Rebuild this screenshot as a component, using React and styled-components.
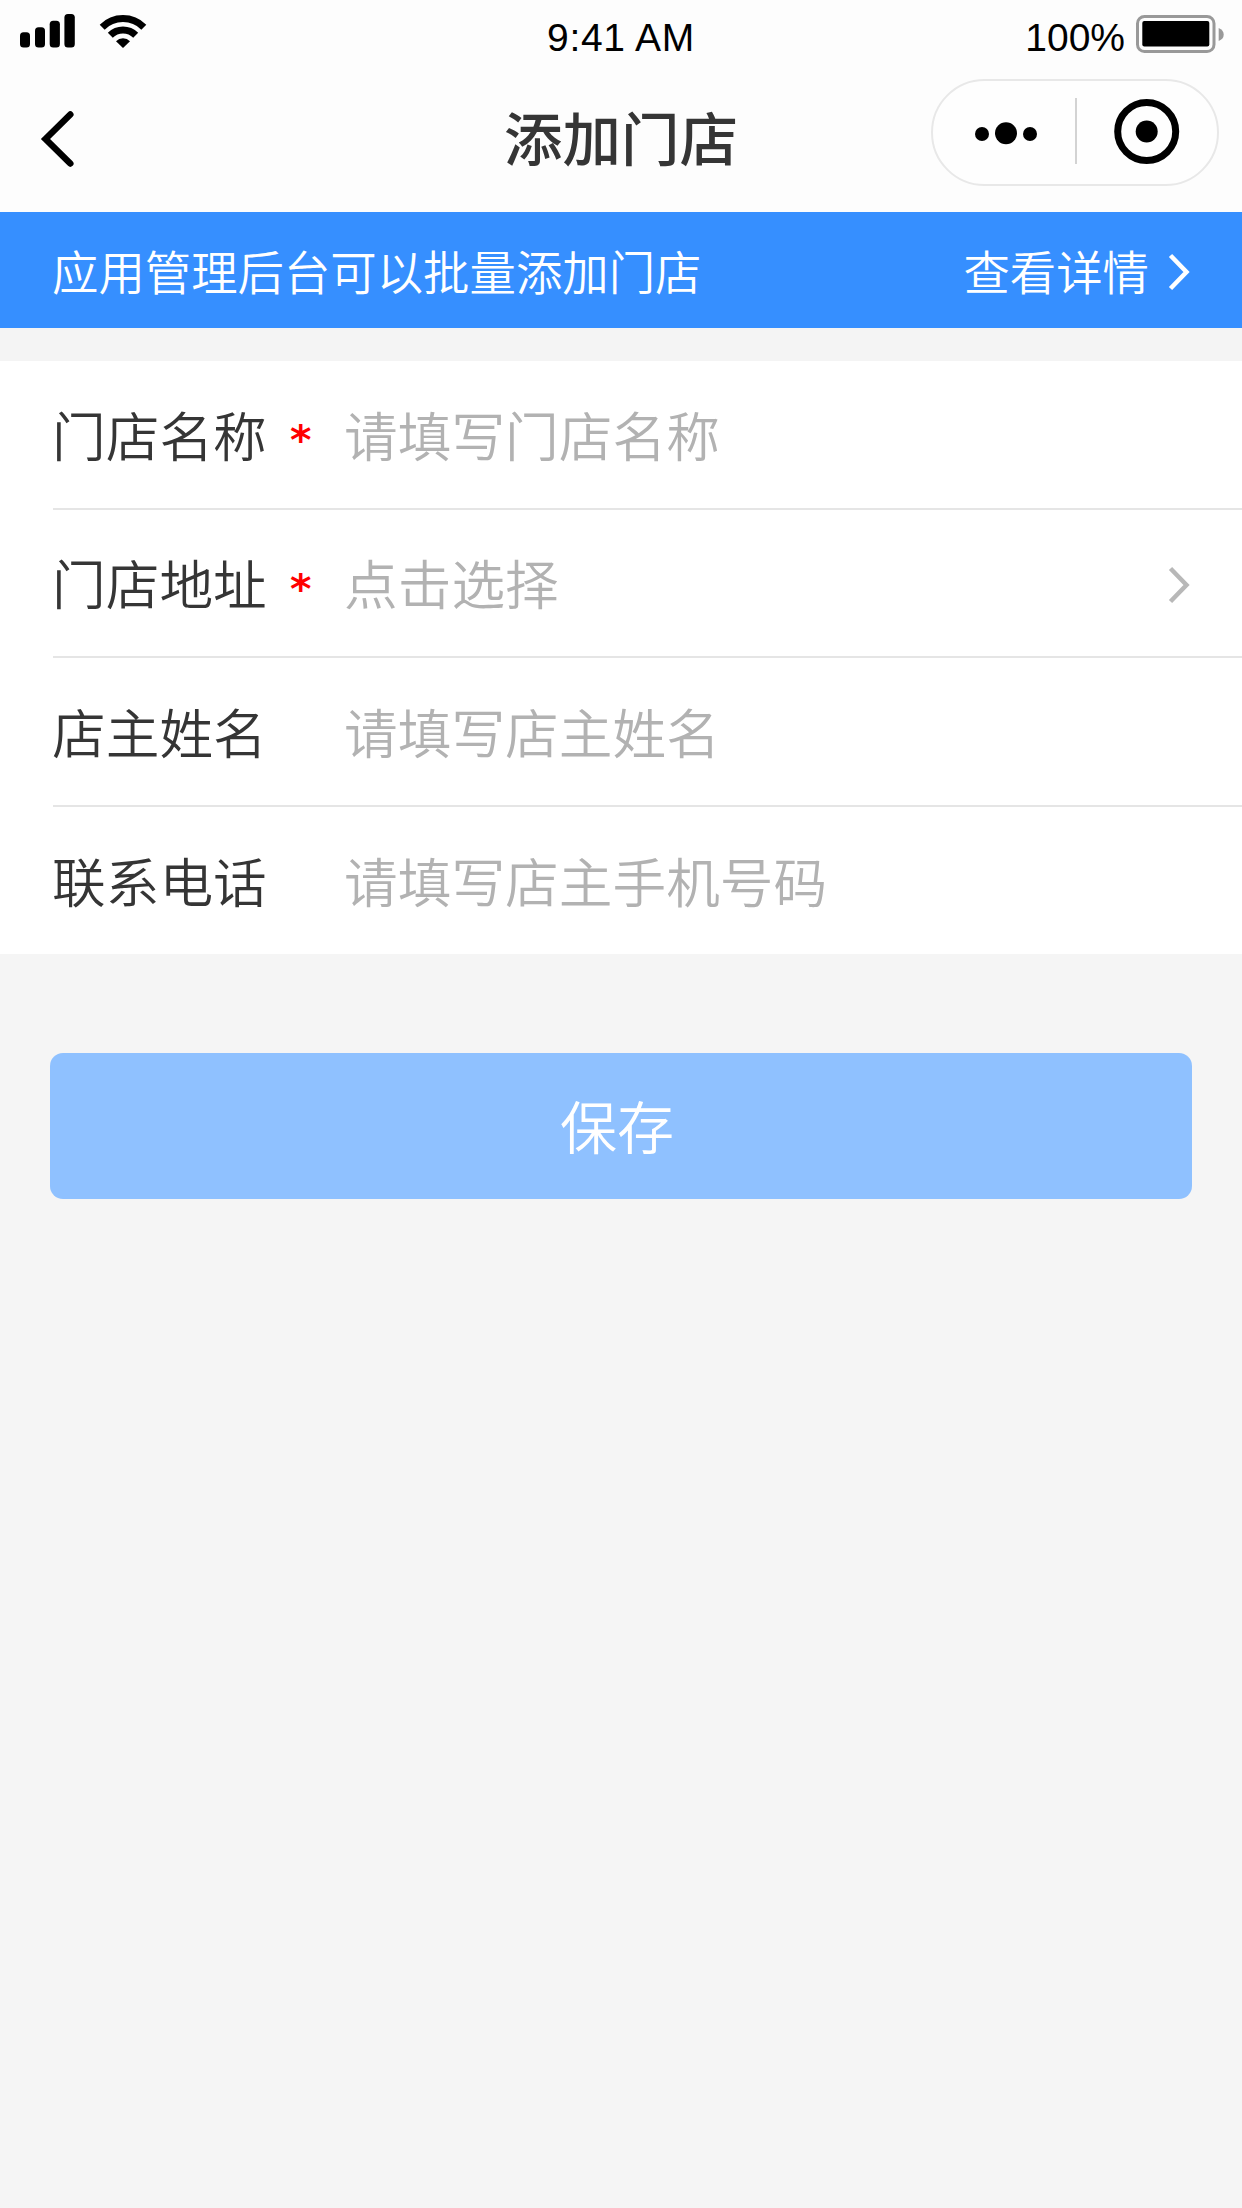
import React from "react";
import styled, { createGlobalStyle } from "styled-components";

const GlobalStyle = createGlobalStyle`
  * {
    box-sizing: border-box;
  }

  body {
    margin: 0;
    background-color: #f5f5f5;
    font-family: "Noto Sans CJK SC", "Noto Sans CJK SC DemiLight", sans-serif;
    font-weight: 350;
    color: #353535;
  }
`;

const Page = styled.div`
  width: 1242px;
  min-height: 2208px;
  display: flex;
  flex-direction: column;
  background-color: #f5f5f5;
`;

const Header = styled.header`
  height: 212px;
  background-color: #fdfdfd;
`;

const StatusBar = styled.div`
  height: 66px;
  padding: 10px 18px;
  display: grid;
  grid-template-columns: 1fr auto 1fr;
  align-items: start;
`;

const Signals = styled.div`
  display: flex;
`;

const StatusText = styled.span`
  font-family: "Liberation Sans", Arial, sans-serif;
  font-size: 39px;
  font-weight: 400;
  line-height: 56px;
  letter-spacing: ${({ $spacing }) => $spacing || "normal"};
  color: #000;
`;

const Power = styled.div`
  display: flex;
  justify-content: flex-end;
  gap: 9px;
`;

const NavBar = styled.div`
  height: 146px;
  padding: 13px 23px 0 36px;
  display: grid;
  grid-template-columns: 1fr auto 1fr;
  align-items: start;
`;

const BackButton = styled.button`
  width: 48px;
  height: 72px;
  margin-top: 24px;
  padding: 0;
  border: none;
  background: none;
`;

const Title = styled.h1`
  margin: 0 13px 0 0;
  font-size: 58.5px;
  font-weight: 500;
  line-height: 114px;
`;

const Capsule = styled.div`
  justify-self: end;
  display: flex;
  align-items: center;
  width: 288px;
  height: 107px;
  padding-bottom: 2px;
  border: 2px solid #e8e8e8;
  border-radius: 54px;
  background-color: #fefefe;
`;

const CapsuleDivider = styled.div`
  width: 2px;
  height: 66px;
  margin-bottom: 2px;
  background-color: #d3d3d3;
`;

const Banner = styled.div`
  height: 116px;
  padding: 0 50px 0 52px;
  display: flex;
  align-items: center;
  justify-content: space-between;
  background-color: #368fff;
  color: #fff;
  font-size: 46.4px;
  line-height: 114px;
`;

const BannerLink = styled.div`
  display: flex;
  align-items: center;
  gap: 19px;
`;

const Form = styled.div`
  height: 626px;
  padding-left: 53px;
  display: grid;
  grid-template-rows: 149px 148px 149px 147px;
  border-top: 33px solid #f4f4f4;
  background-color: #fff;
`;

const Row = styled.div`
  display: flex;
  align-items: center;
  padding-right: 50px;
  border-bottom: ${({ $last }) => ($last ? "none" : "2px solid #e5e5e5")};
  font-size: 53.7px;
  line-height: 144px;
`;

const Label = styled.span`
  width: 238px;
  margin: -2px 0 0 -1px;
`;

const Required = styled.span`
  width: 54px;
  padding-top: 11px;
  font-family: "DejaVu Sans", sans-serif;
  font-size: 41px;
  font-weight: 700;
  line-height: 100px;
  color: #f00;
`;

const Placeholder = styled.span`
  flex: 1;
  margin-top: -2px;
  color: #b2b2b2;
`;

const SaveButton = styled.button`
  height: 146px;
  margin: 99px 50px 0;
  padding: 0 8px 4px 0;
  border: none;
  border-radius: 13px;
  background-color: #8fc1ff;
  color: #fff;
  font-family: inherit;
  font-size: 57px;
  font-weight: inherit;
  line-height: 142px;
`;

const Chevron = styled.svg`
  width: 24px;
  height: 44px;
  margin-top: 3px;
  fill: none;
  stroke: ${({ $color }) => $color};
  stroke-width: 4.5;
`;

const SignalIcon = () => (
  <svg width="58" height="44" viewBox="0 0 58 44">
    <rect x="2" y="22.3" width="10" height="15.2" rx="3.5" />
    <rect x="17" y="17.3" width="10" height="20.2" rx="3.5" />
    <rect x="31.7" y="10.8" width="10.2" height="26.7" rx="3.5" />
    <rect x="46.4" y="4" width="10.4" height="33.5" rx="3.5" />
  </svg>
);

const WifiIcon = () => (
  <svg width="72" height="44" viewBox="76 10 72 44">
    <g fill="none" stroke="#000">
      <path d="M102.2 27.2a29.4 29.4 0 0 1 41.6 0" strokeWidth="7" />
      <path d="M110.3 35.3a18 18 0 0 1 25.4 0" strokeWidth="7" />
    </g>
    <path d="M123 48l-7-6.8a9.9 9.9 0 0 1 14 0z" />
  </svg>
);

const BatteryIcon = () => (
  <svg width="90" height="44" viewBox="1134 10 90 44">
    <rect x="1137.5" y="16.5" width="76.5" height="35" rx="7" fill="none" stroke="#999" strokeWidth="3" />
    <rect x="1142.3" y="21" width="67" height="25.5" rx="2" />
    <path d="M1218.7 28q5 2 5 6.5t-5 6.5z" fill="#999" />
  </svg>
);

const BackIcon = () => (
  <svg width="48" height="72" viewBox="36 103 48 72" fill="none">
    <path d="M70.3 114.5L45.5 139l24.8 24.5" stroke="#000" strokeWidth="6.5" strokeLinecap="round" />
  </svg>
);

const ChevronIcon = ({ color }) => (
  <Chevron viewBox="0 0 24 44" $color={color}>
    <path d="M2.5 5.5L18.5 22 2.5 38.5" />
  </Chevron>
);

const MoreIcon = () => (
  <svg width="142" height="102" viewBox="933 81 142 102">
    <circle cx="982" cy="134" r="7" />
    <circle cx="1006" cy="133.2" r="11" />
    <circle cx="1030" cy="134" r="7" />
  </svg>
);

const TargetIcon = () => (
  <svg width="140" height="102" viewBox="1077 81 140 102">
    <circle cx="1146.7" cy="131.5" r="29" fill="none" stroke="#000" strokeWidth="7" />
    <circle cx="1146.7" cy="131.5" r="11" />
  </svg>
);

const fields = [
  { label: "门店名称", placeholder: "请填写门店名称", required: true },
  { label: "门店地址", placeholder: "点击选择", required: true, select: true },
  { label: "店主姓名", placeholder: "请填写店主姓名" },
  { label: "联系电话", placeholder: "请填写店主手机号码" },
];

const App = () => {
  return (
    <Page>
      <GlobalStyle />
      <Header>
        <StatusBar>
          <Signals>
            <SignalIcon />
            <WifiIcon />
          </Signals>
          <StatusText $spacing="0.7px">9:41 AM</StatusText>
          <Power>
            <StatusText>100%</StatusText>
            <BatteryIcon />
          </Power>
        </StatusBar>
        <NavBar>
          <BackButton aria-label="返回">
            <BackIcon />
          </BackButton>
          <Title>添加门店</Title>
          <Capsule>
            <MoreIcon />
            <CapsuleDivider />
            <TargetIcon />
          </Capsule>
        </NavBar>
      </Header>
      <Banner>
        <span>应用管理后台可以批量添加门店</span>
        <BannerLink>
          查看详情
          <ChevronIcon color="#fff" />
        </BannerLink>
      </Banner>
      <Form>
        {fields.map((field, index) => (
          <Row key={field.label} $last={index === fields.length - 1}>
            <Label>{field.label}</Label>
            <Required>{field.required && "*"}</Required>
            <Placeholder>{field.placeholder}</Placeholder>
            {field.select && <ChevronIcon color="#b8b8b8" />}
          </Row>
        ))}
      </Form>
      <SaveButton>保存</SaveButton>
    </Page>
  );
};

export default App;
